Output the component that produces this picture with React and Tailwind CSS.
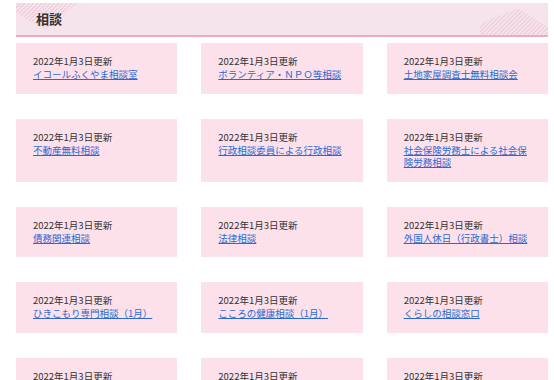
import React from 'react';

const items = [
  'イコールふくやま相談室',
  'ボランティア・ＮＰＯ等相談',
  '土地家屋調査士無料相談会',
  '不動産無料相談',
  '行政相談委員による行政相談',
  '社会保険労務士による社会保険労務相談',
  '債務関連相談',
  '法律相談',
  '外国人休日（行政書士）相談',
  'ひきこもり専門相談（1月）',
  'こころの健康相談（1月）',
  'くらしの相談窓口',
  '消費生活相談',
  '女性相談',
  '人権相談',
];

const Hatch = () => (
  <svg className="absolute inset-0 pointer-events-none" width="532" height="32" viewBox="0 0 532 32">
    <defs>
      <pattern id="hatch" width="3" height="3" patternUnits="userSpaceOnUse" patternTransform="rotate(45)">
        <line x1="0" y1="0" x2="0" y2="3" stroke="#eab3c8" strokeWidth="1.2" />
      </pattern>
    </defs>
    {/* top-left wedge */}
    <polygon points="0,0 61,0 29,27 0,10" fill="url(#hatch)" />
    {/* right-hand hill */}
    <polygon points="464,32 464,21 502,5 532,24 532,32" fill="url(#hatch)" />
  </svg>
);

const Card = ({ title }) => (
  <div className="bg-[#fce0ea] pl-[17px] pr-[15px] pt-[12px] pb-[13px] text-[9.5px] leading-[13px]">
    <p className="text-[#333]">2022年1月3日更新</p>
    <a href="#" className="text-[#2a6bd1] underline leading-[12.5px] block">
      {title}
    </a>
  </div>
);

export default function App() {
  return (
    <div
      className="w-[554px] min-h-[380px] bg-white pl-4 pr-[6px] pt-[3px] overflow-hidden"
      style={{ fontFamily: '"Noto Sans CJK JP", "Noto Sans", sans-serif' }}
    >
      <div className="relative h-[34px] bg-[#f6e4ec] border-b-2 border-[#f1a9c4] flex items-center">
        <Hatch />
        <h2 className="relative pl-[20px] text-[13px] font-bold text-[#333]">相談</h2>
      </div>

      <div className="mt-[6px] grid grid-cols-3 gap-x-6 gap-y-[25px]">
        {items.map((t, i) => (
          <Card key={i} title={t} />
        ))}
      </div>
    </div>
  );
}
